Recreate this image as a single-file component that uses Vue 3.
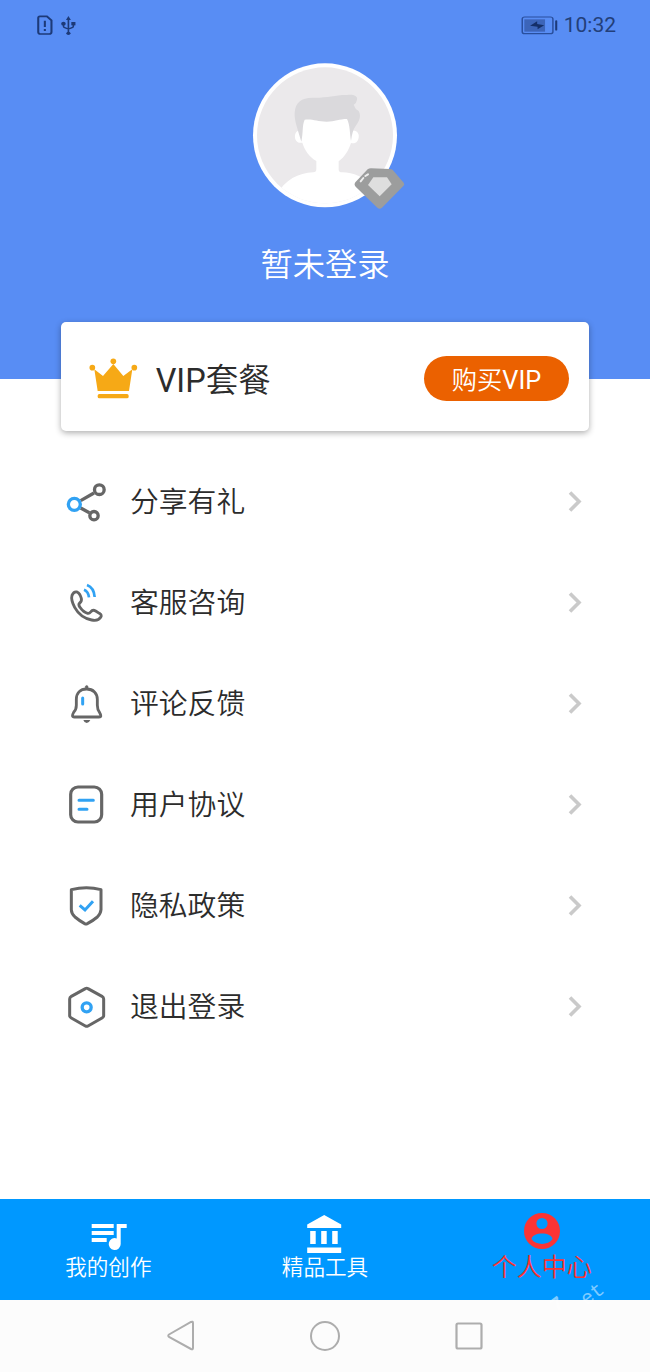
<script setup>
const items = [
  { id: 'share', label: '分享有礼' },
  { id: 'phone', label: '客服咨询' },
  { id: 'bell', label: '评论反馈' },
  { id: 'doc', label: '用户协议' },
  { id: 'shield', label: '隐私政策' },
  { id: 'exit', label: '退出登录' }
]
</script>

<template>
  <div class="screen">
    <header class="hero">
      <div class="status">
        <svg class="status-left" viewBox="0 0 150 60" width="62" height="20" preserveAspectRatio="none">
          <path d="M7 4H24L35 16V51Q35 57 30 57H8Q3 57 3 51V9Q3 4 7 4Z" fill="none" stroke="#1d3a78" stroke-width="5" />
          <path d="M19 17V36M19 42V48" stroke="#1d3a78" stroke-width="5" />
          <g fill="none" stroke="#1d3a78" stroke-width="4">
            <path d="M76 10V54M64 26V33Q64 37 67 38L76 42L85 38Q88 37 88 33V26" />
          </g>
          <g fill="#1d3a78">
            <path d="M76 3L82 15H70Z" />
            <circle cx="64" cy="26" r="5.500" />
            <rect x="83" y="21" width="10" height="10" />
            <circle cx="76" cy="55" r="5" />
          </g>
        </svg>
        <div class="status-right">
          <svg viewBox="0 0 90 60" width="37.300" height="20" preserveAspectRatio="none">
            <rect x="3" y="6" width="74" height="50" rx="6" fill="none" stroke="#294f9d" stroke-width="3.500" />
            <rect x="8" y="13" width="50" height="37" fill="#3c65b9" />
            <path d="M22 32L39 19V27L56 31L40 43V35Z" fill="#142f68" />
            <path d="M85 18V44" stroke="#1d3a78" stroke-width="5" stroke-linecap="round" />
          </svg>
          <span class="time">10:32</span>
        </div>
      </div>
      <svg class="avatar" viewBox="0 0 540 495" width="180" height="165">
        <defs>
          <clipPath id="face"><circle cx="255" cy="241" r="204" /></clipPath>
        </defs>
        <circle cx="255" cy="241" r="216" fill="#fff" />
        <g clip-path="url(#face)">
          <rect x="40" y="25" width="440" height="440" fill="#ebe9eb" />
          <path d="M110 420C135 374 175 354 220 352Q229 352 229 342V318C208 306 194 285 187 263C171 266 163 254 165 240Q167 228 180 226L187 180H328L333 227Q351 224 356 239C358 256 349 268 333 264C326 286 314 306 296 319V344Q297 352 306 352C342 353 370 366 395 390V470H110Z" fill="#fff" />
          <path d="M184 260C175 227 162 196 164 173C166 142 184 128 217 128C257 130 287 119 322 120C340 118 354 123 351 134Q350 144 341 149Q345 162 356 168C365 184 357 200 347 213Q337 226 333 258C329 234 330 209 321 192C298 192 285 200 260 200C232 200 217 191 194 194C186 211 190 232 184 260Z" fill="#dad9dc" />
        </g>
        <path d="M383 343Q387 340 393 340L449 342Q455 342 459 346L491 383Q495 388 490 393L426 458Q419 464 412 458L347 395Q341 389 346 382Z" fill="#9c9d9d" />
        <path d="M400 367H441L455 388L419 424L384 390Z" fill="#dedede" />
        <path d="M384 358L376 363M370 369L362 379" stroke="#ededed" stroke-width="6" stroke-linecap="round" />
      </svg>
      <div class="name">暂未登录</div>
    </header>

    <section class="card">
      <svg class="crown" viewBox="118 144 146 124" width="48.670" height="41.330">
        <g fill="#f6a916">
          <path d="M134 178L160 198L191 162L221 198L248 178L238 243H144Z" />
          <circle cx="191" cy="154" r="8.500" />
          <circle cx="128" cy="173" r="8.500" />
          <circle cx="254" cy="173" r="8.500" />
          <rect x="144" y="252" width="93" height="13" rx="5" />
        </g>
      </svg>
      <span class="plan"><span class="latin">VIP</span>套餐</span>
      <button class="buy">购买<span class="latin">VIP</span></button>
    </section>

    <nav class="menu">
      <div v-for="item in items" :key="item.id" class="row">
        <svg v-if="item.id === 'share'" class="icon" viewBox="30 30 132 132">
          <g fill="none" stroke="#666" stroke-width="10">
            <path d="M77 92L117 69M77 114L103 128" />
            <circle cx="133" cy="59" r="14.500" />
            <circle cx="117" cy="137" r="12.500" />
            <circle cx="58" cy="103" r="18" stroke="#31a2f3" />
          </g>
        </svg>
        <svg v-else-if="item.id === 'phone'" class="icon" viewBox="30 333 132 132">
          <path d="M51 376Q56 364 66 366Q75 370 79 385Q81 394 74 399Q69 404 75 412Q85 427 98 430Q103 431 108 425Q113 418 122 423L133 430Q142 435 137 442Q130 454 110 450Q76 443 59 412Q47 389 51 376Z" fill="none" stroke="#666" stroke-width="8.500" stroke-linejoin="round" />
          <g fill="none" stroke="#31a2f3" stroke-width="8">
            <path d="M96 345Q117 353 119 381M87 359Q100 364 102 382" />
          </g>
        </svg>
        <svg v-else-if="item.id === 'bell'" class="icon" viewBox="30 21 132 132">
          <path d="M95 42C75 42 64 55 64 73V91Q64 104 56 112Q48 126 58 126H132Q142 126 134 113Q127 104 127 91V73C127 55 115 42 95 42Z" fill="none" stroke="#666" stroke-width="8.500" />
          <path d="M91 41V34Q95 29 99 34V41" fill="#666" stroke="#666" stroke-width="2" />
          <path d="M85 135H106Q102 144 95 144Q88 144 85 135Z" fill="#666" />
          <path d="M83 69V87" stroke="#31a2f3" stroke-width="9" stroke-linecap="round" />
        </svg>
        <svg v-else-if="item.id === 'doc'" class="icon" viewBox="30 324 132 132">
          <rect x="47" y="336" width="93" height="105" rx="22" fill="none" stroke="#666" stroke-width="9.500" />
          <path d="M72 376H115M72 403H96" stroke="#31a2f3" stroke-width="9" stroke-linecap="round" />
        </svg>
        <svg v-else-if="item.id === 'shield'" class="icon" viewBox="30 27 132 132">
          <path d="M49 44Q95 32 138 44V104Q137 116 127 126Q114 137 97 146Q93 148 89 146Q73 137 60 126Q49 115 49 104Z" fill="none" stroke="#666" stroke-width="9" stroke-linejoin="round" />
          <path d="M74 91L90 105L114 79" fill="none" stroke="#31a2f3" stroke-width="9" />
        </svg>
        <svg v-else class="icon" viewBox="30 330 132 132">
          <path d="M91 341Q95 338 99 341L141 364Q146 367 146 372V422Q146 426 141 429L99 453Q95 455 91 453L49 429Q44 426 44 422V372Q44 367 49 364Z" fill="none" stroke="#666" stroke-width="9" />
          <circle cx="95" cy="397" r="13.500" fill="none" stroke="#31a2f3" stroke-width="10" />
        </svg>
        <span class="label">{{ item.label }}</span>
        <svg class="chevron" viewBox="0 0 14 22" width="14" height="22"><path d="M2 1.500L11 10.500L2 19.500" fill="none" stroke="#cacaca" stroke-width="3.600" /></svg>
      </div>
    </nav>

    <footer class="tabs">
      <div class="tab">
        <svg viewBox="0 0 36 38" width="36" height="38" fill="#fff">
          <path transform="translate(.7 0)" d="M1 8H23V12H1ZM1 15H23V19H1ZM1 22H16V26H1ZM26 8H36V12H30V28A6 6 0 1 1 26 22.400Z" />
        </svg>
        <span>我的创作</span>
      </div>
      <div class="tab">
        <svg viewBox="0 0 36 38" width="36" height="38" fill="#fff">
          <path transform="translate(-.8 0)" d="M18 -1L35 8.500V12H1V8.500ZM4 15H9.500V28H4ZM15 15H20.500V28H15ZM26 15H31.500V28H26ZM1 31.500H35V37H1Z" />
        </svg>
        <span>精品工具</span>
      </div>
      <div class="tab active">
        <svg viewBox="0 0 36 38" width="36" height="38">
          <circle cx="18" cy="15" r="18" fill="#fb3434" />
          <circle cx="18" cy="7.500" r="5.600" fill="#0098ff" />
          <path d="M7.500 23C8 15.500 28 15.500 28.500 23C24 29.500 12 29.500 7.500 23Z" fill="#0098ff" />
        </svg>
        <span>个人中心</span>
      </div>
      <span class="mark seven">7</span>
      <span class="mark et">et</span>
    </footer>

    <div class="system">
      <svg viewBox="0 0 28 32" width="28" height="32"><path d="M2 14.500L24 2Q26 1 26 3V28Q26 30 24 29L2 17Q.5 15.800 2 14.500Z" fill="none" stroke="#adadad" stroke-width="2" /></svg>
      <svg viewBox="0 0 30 30" width="30" height="30"><circle cx="15" cy="15" r="14" fill="none" stroke="#adadad" stroke-width="2" /></svg>
      <svg viewBox="0 0 28 28" width="28" height="28"><rect x="1.500" y="1.500" width="25" height="25" rx="1.500" fill="none" stroke="#adadad" stroke-width="2.200" /></svg>
    </div>
  </div>
</template>

<style>
body {
  margin: 0;
}
</style>

<style scoped>
.screen {
  width: 650px;
  height: 1372px;
  display: flex;
  flex-direction: column;
  overflow: hidden;
  background: #fff;
  color: #2c2c2c;
  font-family: Roboto, "Noto Sans CJK SC DemiLight", "Noto Sans CJK SC", sans-serif;
  font-weight: 350;
}
svg {
  display: block;
  flex: none;
}
.latin {
  font-weight: 400;
}
.hero {
  height: 379px;
  flex: none;
  background: #588df4;
  display: flex;
  flex-direction: column;
  align-items: center;
}
.status {
  align-self: stretch;
  height: 50px;
  box-sizing: border-box;
  padding: 0 34px 0 37px;
  display: flex;
  align-items: center;
  justify-content: space-between;
}
.status-right {
  display: flex;
  align-items: center;
  gap: 5px;
  color: #233f79;
}
.time {
  font-size: 21px;
  font-weight: 400;
  line-height: 24px;
}
.avatar {
  margin: 5px 0 0 10px;
}
.name {
  margin-top: 21px;
  height: 48px;
  line-height: 48px;
  font-size: 32.3px;
  color: #fff;
}
.card {
  width: 528px;
  height: 109px;
  flex: none;
  margin: -57px 0 0 61px;
  box-sizing: border-box;
  padding: 3px 20px 0 28px;
  display: flex;
  align-items: center;
  background: #fff;
  border-radius: 5px;
  box-shadow: 0 2px 6px rgba(0, 0, 0, 0.32);
}
.crown {
  margin-top: 1px;
}
.plan {
  margin-left: 18px;
  padding-top: 5px;
  font-size: 32.5px;
  line-height: 48px;
}
.buy {
  margin: 0 0 0 auto;
  width: 145px;
  height: 45px;
  padding: 0;
  border: 0;
  border-radius: 23px;
  background: #eb6100;
  color: #fff;
  font: inherit;
  font-size: 25.3px;
}
.menu {
  margin-top: 20px;
  padding: 0 68px 0 65px;
}
.row {
  height: 101.1px;
  display: flex;
  align-items: center;
}
.icon {
  width: 44px;
  height: 44px;
}
.label {
  margin-left: 21px;
  font-size: 28.8px;
  line-height: 44px;
}
.chevron {
  margin-left: auto;
}
.tabs {
  position: relative;
  margin-top: auto;
  height: 101px;
  flex: none;
  display: flex;
  background: #0098ff;
  color: #fff;
}
.tab {
  flex: 1;
  padding-top: 17px;
  display: flex;
  flex-direction: column;
  align-items: center;
  font-size: 21.6px;
}
.tab svg {
  overflow: visible;
}
.tab span {
  line-height: 28px;
}
.active {
  color: #fb3434;
}
.active span {
  font-size: 25px;
  font-weight: 300;
}
.mark {
  position: absolute;
  color: rgba(255, 255, 255, 0.5);
  font: 20px/20px "Liberation Mono", monospace;
  transform: rotate(-38deg);
}
.seven {
  left: 552px;
  top: 96px;
  font-weight: 700;
}
.et {
  left: 581px;
  top: 86px;
}
.system {
  height: 72px;
  flex: none;
  box-sizing: border-box;
  padding: 0 167px;
  display: flex;
  align-items: center;
  justify-content: space-between;
  background: #fcfcfc;
}
</style>
